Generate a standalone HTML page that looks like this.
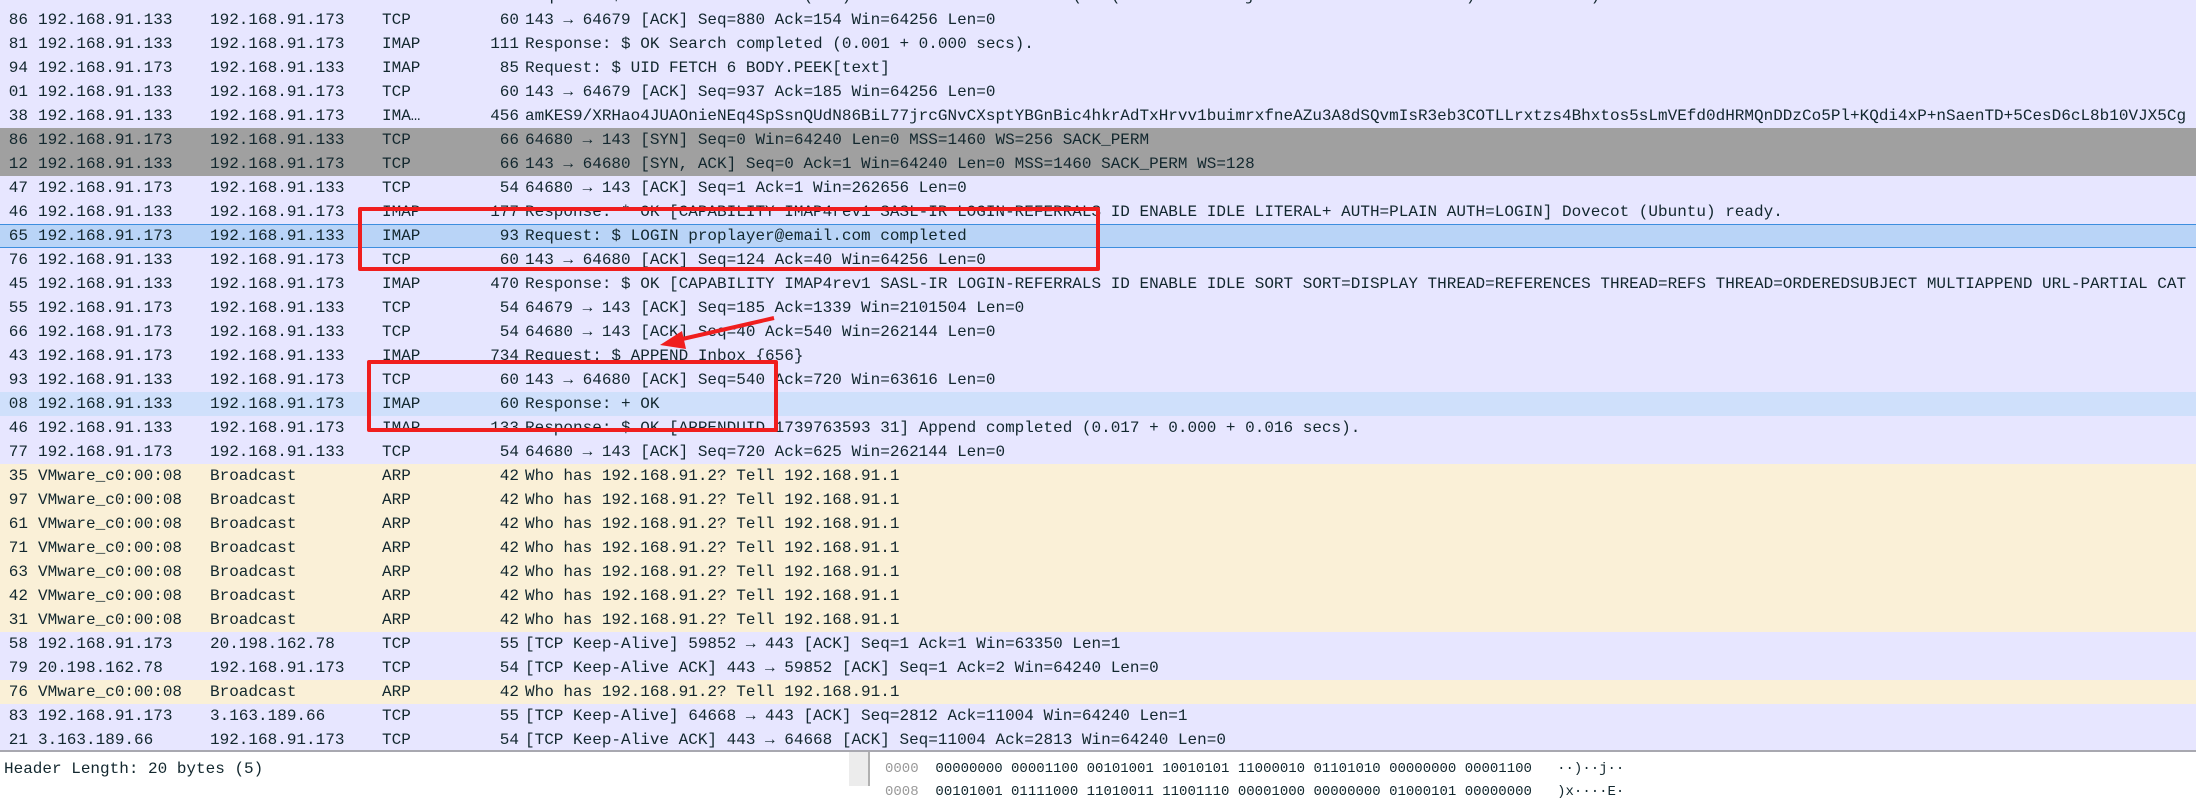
<!DOCTYPE html>
<html><head><meta charset="utf-8"><style>
*{margin:0;padding:0;box-sizing:border-box}
body{width:2196px;height:786px;overflow:hidden;background:#fff;font-family:"Liberation Mono",monospace;font-size:16px;color:#12272e;position:relative}
.r{position:absolute;left:0;width:2196px;height:24px;line-height:24px;white-space:pre;background:#e7e6ff}
.r span{position:absolute;top:0}
.n{left:0;width:28px;text-align:right}
.s{left:38px}.d{left:210px}.p{left:382px}
.l{left:470px;width:49px;text-align:right}
.i{left:525px}
.g{background:#a0a0a0}
.a{background:#faf0d7}
.sel{background:#b9d4f7;border-top:1px solid #3d8ede;border-bottom:1px solid #3d8ede;line-height:22px}
.lb{background:#cfe0fb}
.box{position:absolute;border:4px solid #f01e1e;border-radius:2px}
</style></head><body>
<div id="t"></div>
<div style="position:absolute;left:0;top:750px;width:2196px;height:2px;background:#a8a8b0"></div>
<div style="position:absolute;left:0;top:752px;width:2196px;height:34px;background:#fff"></div>
<div style="position:absolute;left:4px;top:757px;white-space:pre;line-height:24px">Header Length: 20 bytes (5)</div>
<div style="position:absolute;left:849px;top:752px;width:19px;height:34px;background:#ececec"></div>
<div style="position:absolute;left:868px;top:752px;width:2px;height:34px;background:#b0b0b0"></div>
<div style="position:absolute;left:885px;top:757px;white-space:pre;line-height:24px;font-size:14px"><span style="color:#999">0000</span>  00000000 00001100 00101001 10010101 11000010 01101010 00000000 00001100   ··)··j··</div>
<div style="position:absolute;left:885px;top:780px;white-space:pre;line-height:24px;font-size:14px"><span style="color:#999">0008</span>  00101001 01111000 11010011 11001110 00001000 00000000 01000101 00000000   )x····E·</div>
<div class="box" style="left:358px;top:207px;width:742px;height:64px"></div>
<div class="box" style="left:367px;top:360px;width:411px;height:72px"></div>
<svg style="position:absolute;left:0;top:0" width="2196" height="786"><line x1="774" y1="318" x2="678" y2="340" stroke="#f01e1e" stroke-width="4"/><polygon points="660,345 682,331 686,349" fill="#f01e1e"/></svg>
<script>
var rows=[
["74","192.168.91.173","192.168.91.133","IMAP","191","Request: $ UID SEARCH return (ALL) UID 1:6 CHARSET UTF-8 (OR (OR HEADER Subject \"test\" BODY \"test\") TEXT \"test\")",""],
["86","192.168.91.133","192.168.91.173","TCP","60","143 → 64679 [ACK] Seq=880 Ack=154 Win=64256 Len=0",""],
["81","192.168.91.133","192.168.91.173","IMAP","111","Response: $ OK Search completed (0.001 + 0.000 secs).",""],
["94","192.168.91.173","192.168.91.133","IMAP","85","Request: $ UID FETCH 6 BODY.PEEK[text]",""],
["01","192.168.91.133","192.168.91.173","TCP","60","143 → 64679 [ACK] Seq=937 Ack=185 Win=64256 Len=0",""],
["38","192.168.91.133","192.168.91.173","IMA…","456","amKES9/XRHao4JUAOnieNEq4SpSsnQUdN86BiL77jrcGNvCXsptYBGnBic4hkrAdTxHrvv1buimrxfneAZu3A8dSQvmIsR3eb3COTLLrxtzs4Bhxtos5sLmVEfd0dHRMQnDDzCo5Pl+KQdi4xP+nSaenTD+5CesD6cL8b10VJX5Cg",""],
["86","192.168.91.173","192.168.91.133","TCP","66","64680 → 143 [SYN] Seq=0 Win=64240 Len=0 MSS=1460 WS=256 SACK_PERM","g"],
["12","192.168.91.133","192.168.91.173","TCP","66","143 → 64680 [SYN, ACK] Seq=0 Ack=1 Win=64240 Len=0 MSS=1460 SACK_PERM WS=128","g"],
["47","192.168.91.173","192.168.91.133","TCP","54","64680 → 143 [ACK] Seq=1 Ack=1 Win=262656 Len=0",""],
["46","192.168.91.133","192.168.91.173","IMAP","177","Response: * OK [CAPABILITY IMAP4rev1 SASL-IR LOGIN-REFERRALS ID ENABLE IDLE LITERAL+ AUTH=PLAIN AUTH=LOGIN] Dovecot (Ubuntu) ready.",""],
["65","192.168.91.173","192.168.91.133","IMAP","93","Request: $ LOGIN proplayer@email.com completed","sel"],
["76","192.168.91.133","192.168.91.173","TCP","60","143 → 64680 [ACK] Seq=124 Ack=40 Win=64256 Len=0",""],
["45","192.168.91.133","192.168.91.173","IMAP","470","Response: $ OK [CAPABILITY IMAP4rev1 SASL-IR LOGIN-REFERRALS ID ENABLE IDLE SORT SORT=DISPLAY THREAD=REFERENCES THREAD=REFS THREAD=ORDEREDSUBJECT MULTIAPPEND URL-PARTIAL CAT",""],
["55","192.168.91.173","192.168.91.133","TCP","54","64679 → 143 [ACK] Seq=185 Ack=1339 Win=2101504 Len=0",""],
["66","192.168.91.173","192.168.91.133","TCP","54","64680 → 143 [ACK] Seq=40 Ack=540 Win=262144 Len=0",""],
["43","192.168.91.173","192.168.91.133","IMAP","734","Request: $ APPEND Inbox {656}",""],
["93","192.168.91.133","192.168.91.173","TCP","60","143 → 64680 [ACK] Seq=540 Ack=720 Win=63616 Len=0",""],
["08","192.168.91.133","192.168.91.173","IMAP","60","Response: + OK","lb"],
["46","192.168.91.133","192.168.91.173","IMAP","133","Response: $ OK [APPENDUID 1739763593 31] Append completed (0.017 + 0.000 + 0.016 secs).",""],
["77","192.168.91.173","192.168.91.133","TCP","54","64680 → 143 [ACK] Seq=720 Ack=625 Win=262144 Len=0",""]];
["35","97","61","71","63","42","31"].forEach(function(n){rows.push([n,"VMware_c0:00:08","Broadcast","ARP","42","Who has 192.168.91.2? Tell 192.168.91.1","a"])});
rows.push(["58","192.168.91.173","20.198.162.78","TCP","55","[TCP Keep-Alive] 59852 → 443 [ACK] Seq=1 Ack=1 Win=63350 Len=1",""]);
rows.push(["79","20.198.162.78","192.168.91.173","TCP","54","[TCP Keep-Alive ACK] 443 → 59852 [ACK] Seq=1 Ack=2 Win=64240 Len=0",""]);
rows.push(["76","VMware_c0:00:08","Broadcast","ARP","42","Who has 192.168.91.2? Tell 192.168.91.1","a"]);
rows.push(["83","192.168.91.173","3.163.189.66","TCP","55","[TCP Keep-Alive] 64668 → 443 [ACK] Seq=2812 Ack=11004 Win=64240 Len=1",""]);
rows.push(["21","3.163.189.66","192.168.91.173","TCP","54","[TCP Keep-Alive ACK] 443 → 64668 [ACK] Seq=11004 Ack=2813 Win=64240 Len=0",""]);
var h="";
rows.forEach(function(r,k){
 var e=function(s){return s.replace(/&/g,"&amp;").replace(/</g,"&lt;")};
 h+='<div class="r '+r[6]+'" style="top:'+(-16+24*k)+'px"><span class="n">'+r[0]+'</span><span class="s">'+e(r[1])+'</span><span class="d">'+e(r[2])+'</span><span class="p">'+r[3]+'</span><span class="l">'+r[4]+'</span><span class="i">'+e(r[5])+'</span></div>';
});
document.getElementById("t").innerHTML=h;
</script>
</body></html>
